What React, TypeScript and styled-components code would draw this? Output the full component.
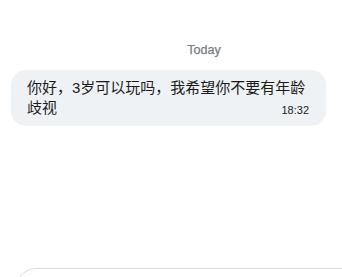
import { FC } from "react";
import styled, { createGlobalStyle } from "styled-components";

const GlobalStyle = createGlobalStyle`
  html, body {
    margin: 0;
    padding: 0;
    background: #ffffff;
  }
  body {
    font-family: "Liberation Sans", Arial, "Noto Sans CJK SC", sans-serif;
    overflow: hidden;
  }
`;

const Page = styled.div`
  width: 342px;
  height: 320px;
  display: flex;
  flex-direction: column;
`;

const DayLabel = styled.div`
  padding: 42px 0 0 66px;
  text-align: center;
  font-size: 12.5px;
  line-height: 16px;
  font-weight: 400;
  -webkit-text-stroke: 0.25px #717d8a;
  color: #717d8a;
`;

const Bubble = styled.div`
  margin: 12px 16px 0 11px;
  padding: 8px 17px 8px 16px;
  background: #eff2f4;
  border-radius: 15px;
  color: #1b1b1b;
  font-size: 15px;
  line-height: 20px;
  &::after {
    content: "";
    display: block;
    clear: both;
  }
`;

const Time = styled.span`
  float: right;
  margin-top: 6px;
  font-size: 11px;
  line-height: 13px;
  color: #1b1b1b;
`;

const Spacer = styled.div`
  flex: 1;
`;

const Composer = styled.div`
  margin: 0 -40px 10px 16px;
  height: 40px;
  flex-shrink: 0;
  border: 1px solid #d3dde2;
  border-radius: 20px;
`;

const App: FC = () => {
  return (
    <Page>
      <GlobalStyle />
      <DayLabel>Today</DayLabel>
      <Bubble>
        你好，3岁可以玩吗，我希望你不要有年龄歧视
        <Time>18:32</Time>
      </Bubble>
      <Spacer />
      <Composer />
    </Page>
  );
};

export default App;
